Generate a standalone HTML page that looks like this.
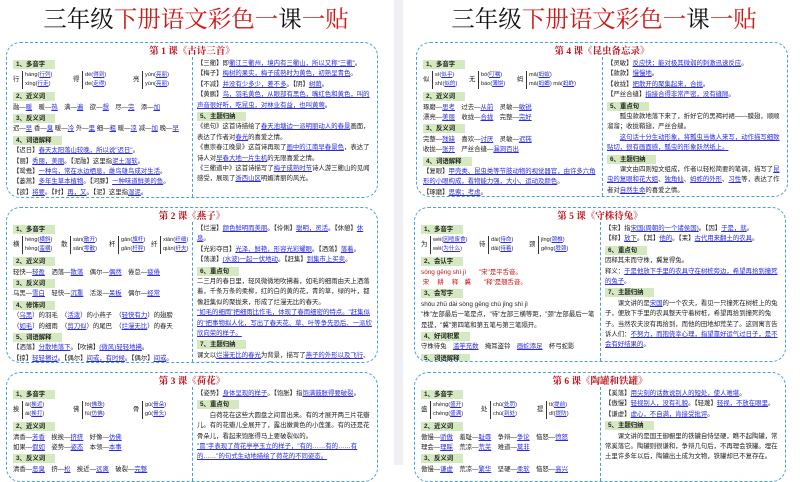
<!DOCTYPE html>
<html><head><meta charset="utf-8">
<style>
*{margin:0;padding:0;box-sizing:border-box}
body{width:800px;height:465px;overflow:hidden;background:#fff;font-family:"Liberation Sans","Noto Sans CJK SC",sans-serif;font-size:6.4px;color:#222;position:relative}
.gap{position:absolute;left:394px;top:0;width:9px;height:465px;background:#eef0f3}
.title{position:absolute;top:5px;width:392px;text-align:center;font-family:"Liberation Serif","Noto Serif CJK SC",serif;font-size:23.5px;line-height:30px;color:#111}
.title .r{color:#d01818}
.box{position:absolute;width:372px;border:1.5px dashed #4a9fd8;border-radius:14px;overflow:hidden}
.box h3{position:absolute;top:3px;left:0;width:100%;text-align:center;font-family:"Liberation Serif","Noto Serif CJK SC",serif;font-size:9.5px;color:#b8141c;font-weight:bold;line-height:12px}
.div{position:absolute;left:185px;top:14px;bottom:0;border-left:1px dashed #4a9fd8}
.col{position:absolute;top:16px;line-height:10.4px;white-space:nowrap}
.col.l{left:6px;width:176px;overflow:hidden}
.col.r{left:190px;width:178px;white-space:normal}
.s{display:inline-block;background:#d4e9c0;font-weight:bold;padding:0 10px 0 3px;line-height:9px;margin:1px 0 0}
a{color:#2a2ae0;text-decoration:underline}
.poly{height:20.8px;position:relative}
.poly span{display:inline-block;width:60px;position:relative;height:20.8px;vertical-align:top}
.poly b{font-weight:normal;position:absolute;top:5px;left:0;font-size:6.4px}
.poly i{font-style:normal;position:absolute;left:9px;font-size:5.6px;line-height:9px;border-left:1px solid #333;padding-left:2px}
.red{color:#cc1111}
</style></head><body>
<div class="gap"></div>
<div class="title" style="left:0">三年级<span class="r">下册语文彩色一</span>课<span class="r">一贴</span></div>
<div class="title" style="left:408px">三年级<span class="r">下册语文彩色一</span>课<span class="r">一贴</span></div>

<!-- Box 1 -->
<div class="box" style="left:6px;top:42px;height:156px">
<h3>第 1 课《古诗三首》</h3><div class="div"></div>
<div class="col l">
<div><span class="s">1、多音字</span></div>
<div class="poly"><span><b>行</b><i style="top:1px">háng(<a>行列</a>)</i><i style="top:10px">xíng(<a>行走</a>)</i></span><span><b>得</b><i style="top:1px">dé(<a>得到</a>)</i><i style="top:10px">de(<a>走得</a>)</i></span><span><b>亮</b><i style="top:1px">yún(<a>亮丽</a>)</i><i style="top:10px">yùn(<a>亮丽</a>)</i></span></div>
<div><span class="s">2、近义词</span></div>
<div>融—<a>暖</a>　暖—<a>热</a>　满—<a>遍</a>　欲—<a>想</a>　尽—<a>完</a>　添—<a>加</a></div>
<div><span class="s">3、反义词</span></div>
<div>迟—<a>早</a> 香—<a>臭</a> 暖—<a>冷</a> 外—<a>里</a> 细—<a>粗</a> 暖—<a>凉</a> 减—<a>加</a> 晚—<a>早</a></div>
<div><span class="s">4、词语解释</span></div>
<div>【迟日】<a>春天太阳落山较晚，所以说"迟日"</a>。</div>
<div>【丽】<a>秀丽，美丽</a>。【泥融】这里指<a>泥土湿软</a>。</div>
<div>【鸳鸯】<a>一种鸟，常在水边栖息，雌鸟雄鸟成对生活</a>。</div>
<div>【蒌蒿】<a>多年生草本植物</a>。【河豚】<a>一种味道鲜美的鱼</a>。</div>
<div>【欲】<a>将要</a>。【时】<a>再，又</a>。【泥】这里指<a>湿泥</a>。</div>
</div>
<div class="col r">
<div>【三衢】即<a>衢江三衢州，境内有三衢山，所以又称"三衢"</a>。</div>
<div>【梅子】<a>梅树的果实，梅子成熟时为黄色，初熟呈青色</a>。</div>
<div>【不减】<a>并没有少多少，差不多</a>。【阴】<a>树荫</a>。</div>
<div>【黄鹂】<a>鸟，羽毛黄色，从眼部有黑色，嘴红色和黄色，叫的声音很好听，吃昆虫，对林业有益，也叫黄莺</a>。</div>
<div><span class="s">5、主题归纳</span></div>
<div>《绝句》这首诗描绘了<a>春天池塘边一派明丽动人的春景</a>画面，表达了作者对<a>春光</a>的喜爱之情。</div>
<div>《惠崇春江晚景》这首诗再现了<a>画中的江南早春景色</a>，表达了诗人对<a>早春大地一片生机</a>的无限喜爱之情。</div>
<div>《三衢道中》这首诗描写了<a>梅子成熟时节</a>诗人游三衢山的见闻感受，展现了<a>浙西山区</a>明媚清丽的风光。</div>
</div>
</div>

<!-- Box 2 -->
<div class="box" style="left:6px;top:207px;height:156px">
<h3>第 2 课《燕子》</h3><div class="div"></div>
<div class="col l">
<div><span class="s">1、多音字</span></div>
<div class="poly"><span style="width:48px"><b>横</b><i style="top:1px">héng(<a>横斜</a>)</i><i style="top:10px">hèng(<a>蛮横</a>)</i></span><span style="width:48px"><b>散</b><i style="top:1px">sàn(<a>散开</a>)</i><i style="top:10px">sǎn(<a>零散</a>)</i></span><span style="width:42px"><b>杆</b><i style="top:1px">gān(<a>旗杆</a>)</i><i style="top:10px">gǎn(<a>杆秤</a>)</i></span><span style="width:36px"><b>纤</b><i style="top:1px">xiān(<a>纤细</a>)</i><i style="top:10px">qiàn(<a>纤夫</a>)</i></span></div>
<div><span class="s">2、近义词</span></div>
<div>轻快—<a>轻盈</a>　洒落—<a>散落</a>　偶尔—<a>偶然</a>　倦怠—<a>疲倦</a></div>
<div><span class="s">3、反义词</span></div>
<div>乌黑—<a>雪白</a>　轻快—<a>沉重</a>　活泼—<a>呆板</a>　偶尔—<a>经常</a></div>
<div><span class="s">4、修饰词</span></div>
<div>（<a>乌黑</a>）的羽毛　（<a>活泼</a>）的小燕子　（<a>轻快有力</a>）的翅膀</div>
<div>（<a>如毛</a>）的细雨　（<a>剪刀似</a>）的尾巴　（<a>烂漫无比</a>）的春天</div>
<div><span class="s">5、词语解释</span></div>
<div>【洒落】<a>分散地落下</a>。【吹拂】<a>(微风)轻轻地拂</a>。</div>
<div>【掠】<a>轻轻擦过</a>。【偶尔】<a>间或，有时候</a>。【偶尔】<a>间或</a>。</div>
</div>
<div class="col r">
<div>【烂漫】<a>颜色鲜明而美丽</a>。【伶俐】<a>聪明，灵活</a>。【休憩】<a>休息</a>。</div>
<div>【光彩夺目】<a>光泽、鲜艳，形容光彩耀眼</a>。【洒落】<a>落着</a>。</div>
<div>【荡漾】<a>(水波)一起一伏地动</a>。【赶集】<a>到集市上买卖</a>。</div>
<div><span class="s">6、重点句</span></div>
<div>二三月的春日里，轻风微微地吹拂着，如毛的细雨由天上洒落着，千条万条的柔柳，红的白的黄的花，青的草，绿的叶，都像赶集似的聚拢来，形成了烂漫无比的春天。</div>
<div><a>"如毛的细雨"把细雨比作毛，体现了春雨细密的特点。"赶集似的"把事物拟人化，写出了春天花、草、叶等争先恐后、一派欣欣向荣的样子。</a></div>
<div><span class="s">7、主题归纳</span></div>
<div>课文以<a>烂漫无比的春光</a>为背景，描写了<a>燕子的外形以及飞行</a>、<a>休憩的姿态</a>，字里行间流露出作者对<a>燕子的喜爱之情</a>。</div>
</div>
</div>

<!-- Box 3 -->
<div class="box" style="left:6px;top:372px;height:110px">
<h3>第 3 课《荷花》</h3><div class="div"></div>
<div class="col l">
<div><span class="s">1、多音字</span></div>
<div class="poly"><span><b>挨</b><i style="top:1px">āi(<a>挨近</a>)</i><i style="top:10px">ái(<a>挨打</a>)</i></span><span><b>佛</b><i style="top:1px">fó(<a>佛珠</a>)</i><i style="top:10px">fú(<a>仿佛</a>)</i></span><span><b>骨</b><i style="top:1px">gū(<a>骨朵</a>)</i><i style="top:10px">gǔ(<a>骨头</a>)</i></span></div>
<div><span class="s">2、近义词</span></div>
<div>清香—<a>芳香</a>　挨挨—<a>挤挤</a>　好像—<a>仿佛</a></div>
<div>如果—<a>假如</a>　姿势—<a>姿态</a>　本领—<a>本事</a></div>
<div><span class="s">3、反义词</span></div>
<div>清香—<a>恶臭</a>　挤—<a>松</a>　挨近—<a>远离</a>　破裂—<a>完整</a></div>
</div>
<div class="col r">
<div>【姿势】<a>身体呈现的样子</a>。【饱胀】指<a>饱满鼓胀得要破裂</a>。</div>
<div><span class="s">5、重点句</span></div>
<div>　　白荷花在这些大圆盘之间冒出来。有的才展开两三片花瓣儿。有的花瓣儿全展开了，露出嫩黄色的小莲蓬。有的还是花骨朵儿，看起来饱胀得马上要破裂似的。</div>
<div><a>"冒"字表现了荷花亭亭玉立的样子，"有的……有的……有的……"的句式生动地描绘了荷花的不同姿态。</a></div>
</div>
</div>

<!-- Box 4 -->
<div class="box" style="left:416px;top:42px;height:155px">
<h3>第 4 课《昆虫备忘录》</h3><div class="div"></div>
<div class="col l">
<div><span class="s">1、多音字</span></div>
<div class="poly"><span style="width:46px"><b>似</b><i style="top:1px">sì(<a>似乎</a>)</i><i style="top:10px">shì(<a>似的</a>)</i></span><span style="width:48px"><b>无</b><i style="top:1px">bó(<a>叮嘱</a>)</i><i style="top:10px">báo(<a>薄饼</a>)</i></span><span style="width:80px"><b>蚂</b><i style="top:1px">mǎ(<a>蚂蚁</a>)</i><i style="top:10px">mā(<a>蚂螂</a>) mà(<a>蚂蚱</a>)</i></span></div>
<div><span class="s">2、近义词</span></div>
<div>琢磨—<a>思考</a>　过去—<a>从前</a>　灵敏—<a>敏锐</a></div>
<div>漂亮—<a>美丽</a>　收拢—<a>合拢</a>　完整—<a>完好</a></div>
<div><span class="s">3、反义词</span></div>
<div>完整—<a>残缺</a>　喜欢—<a>讨厌</a>　灵敏—<a>迟钝</a></div>
<div>收拢—<a>张开</a>　严丝合缝—<a>漏洞百出</a></div>
<div><span class="s">4、词语解释</span></div>
<div style="white-space:normal">【复眼】<a>甲壳类、昆虫类等节肢动物的视觉器官，由许多六角形的小眼构成，看物能力强，大小、运动及颜色</a>。</div>
<div>【琢磨】<a>思索；考虑</a>。</div>
</div>
<div class="col r">
<div>【灵敏】<a>反应快；能对极其微弱的刺激迅速反应</a>。</div>
<div>【款款】<a>慢慢地</a>。</div>
<div>【收拢】<a>把散开的聚集起来，合拢</a>。</div>
<div>【严丝合缝】<a>指接合得非常严密，没有缝隙</a>。</div>
<div><span class="s">5、重点句</span></div>
<div>　　瓢虫款款地落下来了，折好它的黑褐衬裙——膜翅，顺顺溜溜；收拢鞘翅，严丝合缝。</div>
<div>　　<a>这句话十分生动形象，将瓢虫当做人来写，动作描写细致贴切，很有画面感，瓢虫的形象跃然纸上。</a></div>
<div><span class="s">6、主题归纳</span></div>
<div>　　课文由四则短文组成，作者以轻松简要的笔调，描写了<a>昆虫的复眼和花大姐</a>、<a>独角仙</a>、<a>蚂蚱的外形</a>、<a>习性</a>等，表达了作者对<a>自然生命</a>的喜爱之情。</div>
</div>
</div>

<!-- Box 5 -->
<div class="box" style="left:414px;top:207px;height:155px">
<h3>第 5 课《守株待兔》</h3><div class="div"></div>
<div class="col l">
<div><span class="s">1、多音字</span></div>
<div class="poly"><span style="width:58px"><b>为</b><i style="top:1px">wéi(<a>因噎废食</a>)</i><i style="top:10px">wèi(<a>为什么</a>)</i></span><span style="width:50px"><b>待</b><i style="top:1px">dài(<a>待命</a>)</i><i style="top:10px">dāi(<a>待着</a>)</i></span><span><b>颈</b><i style="top:1px">jǐng(<a>颈椎</a>)</i><i style="top:10px">gěng(<a>脖颈</a>)</i></span></div>
<div><span class="s">2、会认字</span></div>
<div class="red">sòng gēng shì jì　　"宋"是平舌音。</div>
<div class="red">&nbsp;宋　 耕　 释　冀　　"释"是翘舌音。</div>
<div><span class="s">3、会写字</span></div>
<div>shǒu zhū dài sòng gēng chù jǐng shì jì</div>
<div style="white-space:normal">"株"左部最后一笔是点，"待"左部三横等距，"颈"左部最后一笔是提，"冀"第四笔和第五笔与第三笔隔开。</div>
<div><span class="s">4、好词积累</span></div>
<div>守株待兔　<a>滥竽充数</a>　掩耳盗铃　<a>画蛇添足</a>　杯弓蛇影</div>
<div><span class="s">5、词语解释</span></div>
<div>【耕者】指<a>种田的人</a>。【株】<a>树桩</a>。【走】<a>跑</a>。【冀】<a>希望</a>。</div>
</div>
<div class="col r">
<div>【宋】指<a>宋国(周朝的一个诸侯国)</a>。【因】<a>于是，就</a>。</div>
<div>【释】<a>放下</a>。【其】<a>他的</a>。【耒】<a>古代用来翻土的农具</a>。</div>
<div><span class="s">6、重点句</span></div>
<div>因释其未而守株，冀复得兔。</div>
<div>释义：<a>于是他放下手里的农具守在树桩旁边，希望再拾到撞死的兔子</a>。</div>
<div><span class="s">7、主题归纳</span></div>
<div>　　课文讲的是<a>宋国</a>的一个农夫，看见一只撞死在树桩上的兔子，便放下手里的农具整天守着树桩，希望再拾到撞死的兔子。当然农夫没有再拾到，而他的田地却荒芜了。这则寓言告诉人们：<a>不努力，而抱侥幸心理，指望靠好运气过日子，是不会有好结果的</a>。</div>
</div>
</div>

<!-- Box 6 -->
<div class="box" style="left:414px;top:372px;height:110px">
<h3>第 6 课《陶罐和铁罐》</h3><div class="div"></div>
<div class="col l">
<div><span class="s">1、多音字</span></div>
<div class="poly"><span style="width:60px"><b>盛</b><i style="top:1px">shèng(<a>盛开</a>)</i><i style="top:10px">chéng(<a>盛满</a>)</i></span><span style="width:56px"><b>处</b><i style="top:1px">chǔ(<a>处罚</a>)</i><i style="top:10px">chù(<a>到处</a>)</i></span><span><b>提</b><i style="top:1px">tí(<a>提前</a>)</i><i style="top:10px">dī(<a>提防</a>)</i></span></div>
<div><span class="s">2、近义词</span></div>
<div>傲慢—<a>骄傲</a>　羞耻—<a>耻辱</a>　争辩—<a>争论</a>　恼怒—<a>愤怒</a></div>
<div>理会—<a>理睬</a>　荒凉—<a>荒芜</a>　难道—<a>莫非</a></div>
<div><span class="s">3、反义词</span></div>
<div>傲慢—<a>谦虚</a>　荒凉—<a>繁华</a>　坚硬—<a>柔软</a>　恼怒—<a>高兴</a></div>
</div>
<div class="col r">
<div>【奚落】<a>用尖刻的话数说别人的短处，使人难堪</a>。</div>
<div>【傲慢】<a>轻视别人，没有礼貌</a>。【轻蔑】<a>轻视，不放在眼里</a>。</div>
<div>【谦虚】<a>虚心，不自满，肯接受批评</a>。</div>
<div><span class="s">5、主题归纳</span></div>
<div>　　课文讲的是国王御橱里的铁罐自恃坚硬，瞧不起陶罐，常常奚落它。陶罐则很谦和，争辩几句后，不再理会铁罐。埋在土里许多年以后，陶罐出土成为文物，铁罐却已不复存在。</div>
</div>
</div>
</body></html>
